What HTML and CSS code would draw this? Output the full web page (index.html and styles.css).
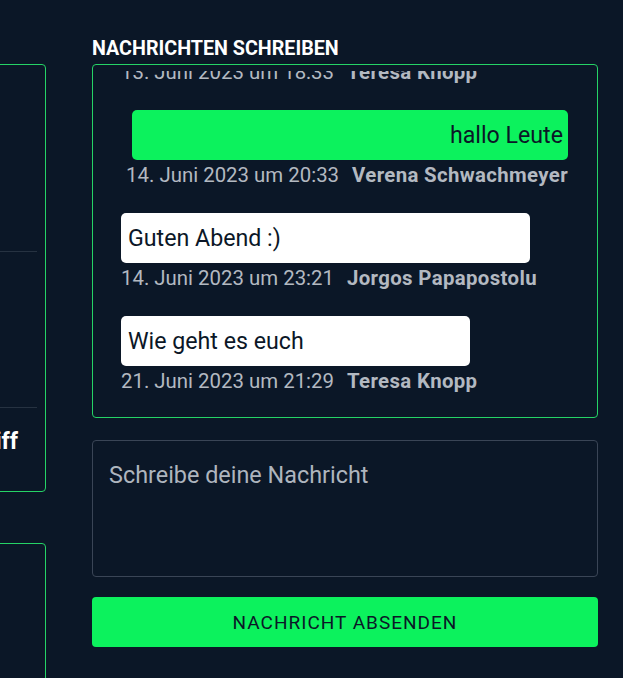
FILE: index.html
```html
<!DOCTYPE html>
<html lang="de">
<head>
<meta charset="utf-8">
<title>Nachrichten</title>
<link rel="stylesheet" href="styles.css">
</head>
<body>
<div class="page">
  <aside class="col-left">
    <h2 class="section-title">PROJEKT</h2>
    <div class="side-card">
      <div class="side-item side-item--first"><span class="side-text side-text--a">Besprechung planen</span></div>
      <div class="side-item side-item--second"><span class="side-text">Aufgaben</span></div>
      <div class="side-item side-item--third"><span class="side-text side-text--c">Zugriff</span></div>
    </div>
    <h2 class="section-title section-title--second">TEAM</h2>
    <div class="side-card side-card--second"></div>
  </aside>

  <main class="col-right">
    <h2 class="section-title">NACHRICHTEN SCHREIBEN</h2>
    <div class="chat">
      <div class="chat-scroll">
        <div class="msg msg--left">
          <div class="bubble bubble--white">Hallo zusammen</div>
          <div class="meta"><span class="meta-date">13. Juni 2023 um 18:33</span><span class="meta-name">Teresa Knopp</span></div>
        </div>
        <div class="msg msg--right">
          <div class="bubble bubble--green">hallo Leute</div>
          <div class="meta"><span class="meta-date">14. Juni 2023 um 20:33</span><span class="meta-name">Verena Schwachmeyer</span></div>
        </div>
        <div class="msg msg--left">
          <div class="bubble bubble--white">Guten Abend :)</div>
          <div class="meta"><span class="meta-date">14. Juni 2023 um 23:21</span><span class="meta-name">Jorgos Papapostolu</span></div>
        </div>
        <div class="msg msg--left">
          <div class="bubble bubble--white">Wie geht es euch</div>
          <div class="meta"><span class="meta-date">21. Juni 2023 um 21:29</span><span class="meta-name">Teresa Knopp</span></div>
        </div>
      </div>
    </div>
    <textarea class="compose" placeholder="Schreibe deine Nachricht"></textarea>
    <button class="send" type="button">NACHRICHT ABSENDEN</button>
  </main>
</div>
</body>
</html>
```

FILE: styles.css
```css
html, body {
  margin: 0;
  padding: 0;
  overflow: hidden;
  background: #0b1727;
}

body {
  font-family: Roboto, "Liberation Sans", Arial, sans-serif;
  color: #ffffff;
}

.page {
  display: flex;
  padding-top: 37px;
  height: 678px;
  box-sizing: border-box;
  overflow: hidden;
}

.col-left {
  flex: 0 0 200px;
  width: 200px;
  margin-left: -154px;
}

.col-right {
  flex: 0 0 506px;
  width: 506px;
  margin-left: 46px;
  display: flex;
  flex-direction: column;
}

.section-title {
  margin: 0 0 4px;
  font-size: 19.7px;
  line-height: 23px;
  font-weight: 700;
  color: #ffffff;
  white-space: nowrap;
}

.section-title--second {
  margin-top: 24px;
}

.side-card {
  border: 1px solid #25d366;
  border-radius: 4px;
  padding: 0 8px 0 16px;
  height: 428px;
  box-sizing: border-box;
  overflow: hidden;
}

.side-card--second {
  height: 200px;
}

.side-item {
  display: flex;
  justify-content: flex-end;
  box-sizing: border-box;
  border-bottom: 1px solid #263241;
  font-size: 23px;
  line-height: 34px;
  font-weight: 700;
  white-space: nowrap;
}

.side-item--first {
  height: 187px;
  align-items: center;
}

.side-item--second {
  height: 156px;
  align-items: center;
}

.side-item--third {
  border-bottom: none;
  padding-top: 17px;
}

.side-text--a {
  padding-right: 31px;
}

.side-text {
  padding-right: 60px;
}

.side-text--c {
  padding-right: 19px;
}

.chat {
  height: 354px;
  box-sizing: border-box;
  border: 1px solid #25d366;
  border-radius: 4px;
  padding-top: 6px;
  display: flex;
  flex-direction: column;
}

.chat-scroll {
  flex: 1;
  min-height: 0;
  overflow: hidden;
  display: flex;
  flex-direction: column;
  justify-content: flex-end;
  padding: 0 29px 24px 28px;
}

.msg {
  display: flex;
  flex-direction: column;
  margin-top: 26px;
  flex-shrink: 0;
}

.msg--left {
  align-self: flex-start;
}

.msg--right {
  align-self: flex-end;
}

.bubble {
  height: 50px;
  box-sizing: border-box;
  padding: 8px 7px;
  border-radius: 5px;
  font-size: 23.2px;
  line-height: 34px;
  color: #0b1727;
  white-space: nowrap;
}

.bubble--white {
  background: #ffffff;
  margin-right: 7px;
}

.bubble--green {
  background: #0cf25d;
  margin-left: 6px;
  text-align: right;
  padding-right: 5px;
}

.meta {
  margin-top: 3px;
  font-size: 20.4px;
  line-height: 24px;
  color: #b3b9c1;
  white-space: nowrap;
}

.msg--right .meta {
  text-align: right;
}

.meta-name {
  font-weight: 700;
  margin-left: 13px;
  letter-spacing: 0.35px;
}

.compose {
  display: block;
  width: 100%;
  height: 137px;
  box-sizing: border-box;
  margin: 22px 0 0;
  padding: 17px 16px;
  background: transparent;
  border: 1px solid #3a4556;
  border-radius: 4px;
  font-family: Roboto, "Liberation Sans", Arial, sans-serif;
  font-size: 23.4px;
  line-height: 34px;
  color: #ffffff;
  resize: none;
  outline: none;
}

.compose::placeholder {
  color: #aeb5be;
  opacity: 1;
}

.send {
  display: block;
  width: 100%;
  height: 50px;
  margin-top: 20px;
  border: none;
  border-radius: 4px;
  background: #0cf25d;
  color: #0b1727;
  font-family: Roboto, "Liberation Sans", Arial, sans-serif;
  font-size: 19px;
  letter-spacing: 1px;
  cursor: pointer;
}
```
